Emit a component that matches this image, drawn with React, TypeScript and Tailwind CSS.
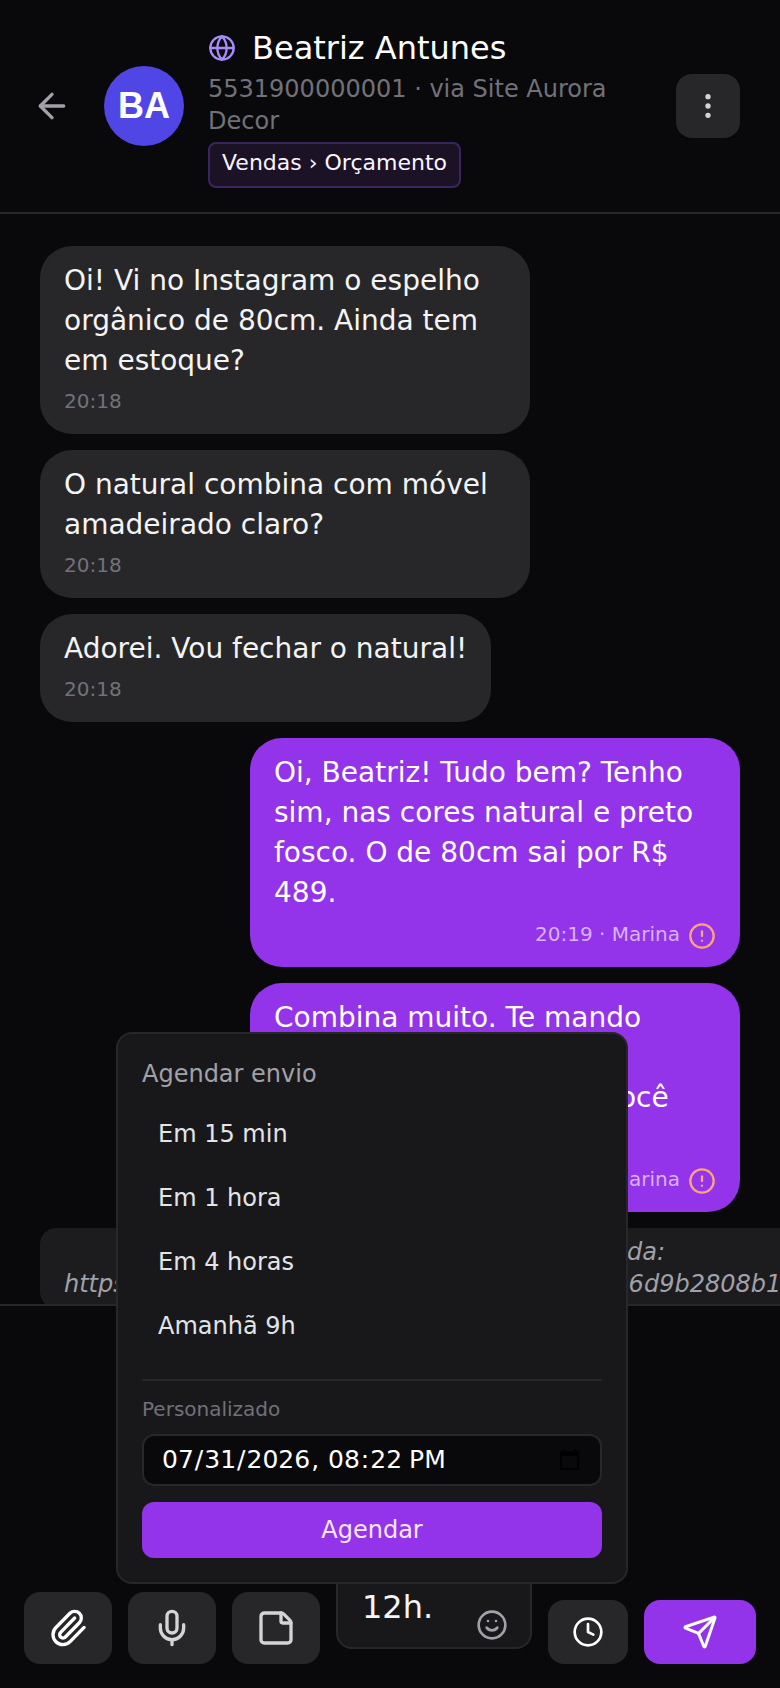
import { ArrowLeft, CircleAlert, Clock, EllipsisVertical, Globe, Mic, Paperclip, Send, Smile, StickyNote } from "lucide-react";

function Incoming({ text, time, width }: { text: string; time: string; width: string }) {
  return (
    <div className={`${width} shrink-0 rounded-[32px] bg-[#27272a] px-6 pb-[13px] pt-[15px] text-[28px] leading-[40px] text-[#f4f4f5]`}>
      <p>{text}</p>
      <div className="text-[20px] leading-[40px] text-[#71717a]">{time}</div>
    </div>
  );
}

function Outgoing({ text }: { text: string }) {
  return (
    <div className="ml-auto w-[490px] shrink-0 rounded-[32px] bg-[#9333ea] px-6 pb-[13px] pt-[15px] text-[28px] leading-[40px] text-white">
      <p>{text}</p>
      <div className="flex h-[41px] items-center justify-end gap-2 text-[20px] leading-[28px] text-[#d8b4fe]">
        <span>20:19 · Marina</span>
        <CircleAlert size={28} strokeWidth={2} className="mt-1 text-[#fca37a]" />
      </div>
    </div>
  );
}

function ToolButton({ children }: { children: React.ReactNode }) {
  return <button className="flex h-[72px] w-[88px] shrink-0 items-center justify-center rounded-2xl bg-[#27272a]">{children}</button>;
}

export default function App() {
  return (
    <div className="relative flex h-[1688px] w-[780px] flex-col overflow-hidden bg-[#09090b] font-['DejaVu_Sans',sans-serif] text-white">
      <header className="flex h-[214px] shrink-0 items-center gap-6 border-b-2 border-[#27272a] pl-6 pr-10">
        <button className="flex w-[56px] shrink-0 items-center justify-center text-[#a1a1aa]">
          <ArrowLeft size={40} />
        </button>
        <div className="flex h-20 w-20 shrink-0 items-center justify-center rounded-full bg-[#4f46e5] font-['Liberation_Sans',sans-serif] text-[36px] font-bold">BA</div>
        <div className="min-w-0 flex-1">
          <div className="mb-0.5 flex items-center gap-4">
            <Globe size={28} className="text-[#a78bfa]" />
            <span className="text-[32px] leading-[46px]">Beatriz Antunes</span>
          </div>
          <p className="text-[24px] leading-[32px] text-[#71717a]">5531900000001 · via Site Aurora Decor</p>
          <span className="mt-[5px] inline-block h-[46px] rounded-lg border-2 border-[#3b2560] bg-[#1c1226] px-3 text-[22px] leading-[38px] text-[#faf5ff]">
            Vendas › Orçamento
          </span>
        </div>
        <button className="flex h-16 w-16 shrink-0 items-center justify-center rounded-2xl bg-[#27272a] text-[#d4d4d8]">
          <EllipsisVertical size={32} />
        </button>
      </header>

      <main className="flex min-h-0 flex-1 flex-col gap-4 overflow-hidden px-10 pt-8">
        <Incoming width="w-[490px]" text="Oi! Vi no Instagram o espelho orgânico de 80cm. Ainda tem em estoque?" time="20:18" />
        <Incoming width="w-[490px]" text="O natural combina com móvel amadeirado claro?" time="20:18" />
        <Incoming width="w-fit" text="Adorei. Vou fechar o natural!" time="20:18" />
        <Outgoing text="Oi, Beatriz! Tudo bem? Tenho sim, nas cores natural e preto fosco. O de 80cm sai por R$ 489." />
        <Outgoing text="Combina muito. Te mando outra foto instalada, aproveitando para que você curta." />
        <div className="w-[800px] shrink-0 rounded-2xl bg-[#1c1c1f] px-6 py-2 text-[24px] italic leading-[32px] text-[#a1a1aa]">
          <span className="block w-[601px] text-right">Mensagem de mídia recebida:</span>
          <span className="block whitespace-nowrap">https://aurora.decor/media/4f1e7a3c9e02ab416d9b2808b1a7c3</span>
        </div>
      </main>

      <footer className="flex h-[384px] shrink-0 items-end gap-4 border-t-2 border-[#27272a] px-6 pb-6 pt-4">
        <ToolButton><Paperclip size={40} className="text-white" /></ToolButton>
        <ToolButton><Mic size={40} className="text-[#d4d4d8]" /></ToolButton>
        <ToolButton><StickyNote size={40} className="text-[#d4d4d8]" /></ToolButton>
        <div className="relative mb-[15px] flex h-full min-w-0 flex-1 flex-col justify-end overflow-hidden rounded-2xl border-2 border-[#27272a] bg-[#18181b] px-6 pb-5 text-[32px] leading-[40px] text-[#f4f4f5]">
          <span>12h.</span>
          <Smile size={32} className="absolute bottom-1.5 right-[22px] text-[#a1a1aa]" />
        </div>
        <button className="flex h-16 w-20 shrink-0 items-center justify-center rounded-2xl bg-[#27272a]"><Clock size={32} /></button>
        <button className="flex h-16 w-[112px] shrink-0 items-center justify-center rounded-2xl bg-[#9333ea]"><Send size={36} /></button>
      </footer>

      <div className="absolute left-[116px] top-[1032px] w-[512px] rounded-2xl border-2 border-[#27272a] bg-[#18181b] p-6">
        <p className="mb-3 text-[24px] leading-[32px] text-[#a1a1aa]">Agendar envio</p>
        {["Em 15 min", "Em 1 hora", "Em 4 horas", "Amanhã 9h"].map((item) => (
          <div key={item} className="px-4 py-3 text-[24px] leading-[40px] text-[#e4e4e7]">{item}</div>
        ))}
        <div className="mt-[21px] border-t-2 border-[#27272a] pt-3.5">
          <label className="mb-[11px] block text-[20px] leading-[28px] text-[#71717a]">Personalizado</label>
          <input
            type="datetime-local"
            defaultValue="2026-07-31T20:22"
            className="h-[52px] w-full rounded-xl border-2 border-[#27272a] bg-[#09090b] pl-[17px] pr-4 text-[25px] text-white"
          />
        </div>
        <button className="mt-4 h-14 w-full rounded-xl bg-[#9333ea] text-[24px] text-[#f3e8ff]">Agendar</button>
      </div>
    </div>
  );
}
